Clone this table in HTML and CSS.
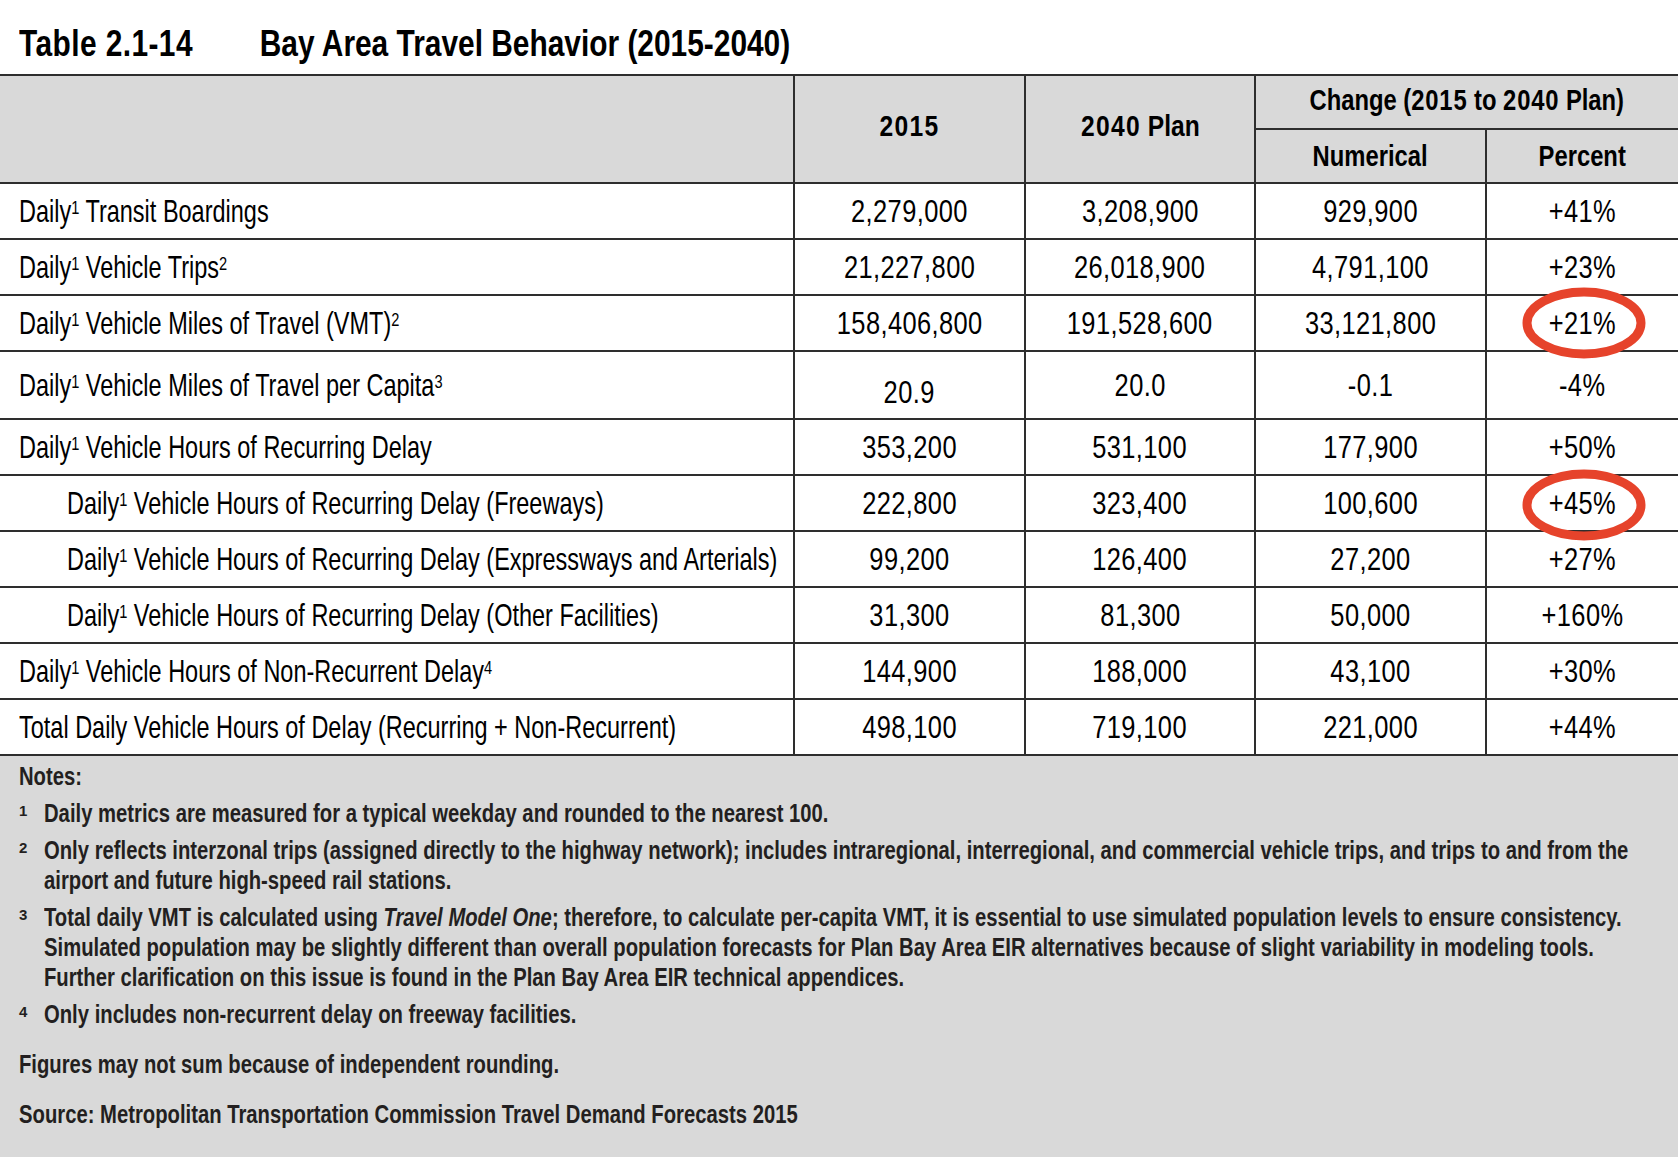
FILE: index.html
```html
<!DOCTYPE html>
<html lang="en">
<head>
<meta charset="utf-8">
<title>Table 2.1-14 Bay Area Travel Behavior (2015-2040)</title>
<link rel="stylesheet" href="styles.css">
</head>
<body>
<div class="page">
  <h1 class="title"><span class="title-num">Table 2.1-14</span><span class="title-name">Bay Area Travel Behavior (2015-2040)</span></h1>
  <table class="data">
    <colgroup>
      <col class="c-label">
      <col class="c-num">
      <col class="c-num2">
      <col class="c-num">
      <col class="c-pct">
    </colgroup>
    <thead>
      <tr class="h1row">
        <th rowspan="2" class="first"></th>
        <th rowspan="2" class="year"><span class="sx"><span class="yr">2015</span></span></th>
        <th rowspan="2" class="year"><span class="sx"><span class="yr">2040</span> Plan</span></th>
        <th colspan="2" class="last change"><span class="sx">Change (<span class="yr2">2015</span> to <span class="yr2">2040</span> Plan)</span></th>
      </tr>
      <tr class="h2row">
        <th><span class="sx">Numerical</span></th>
        <th class="last"><span class="sx">Percent</span></th>
      </tr>
    </thead>
    <tbody>
      <tr>
        <td class="label"><span class="sx">Daily<sup>1</sup> Transit Boardings</span></td>
        <td><span class="sx">2,279,000</span></td><td><span class="sx">3,208,900</span></td><td><span class="sx">929,900</span></td><td class="last"><span class="sx">+41%</span></td>
      </tr>
      <tr>
        <td class="label"><span class="sx">Daily<sup>1</sup> Vehicle Trips<sup>2</sup></span></td>
        <td><span class="sx">21,227,800</span></td><td><span class="sx">26,018,900</span></td><td><span class="sx">4,791,100</span></td><td class="last"><span class="sx">+23%</span></td>
      </tr>
      <tr>
        <td class="label"><span class="sx">Daily<sup>1</sup> Vehicle Miles of Travel (VMT)<sup>2</sup></span></td>
        <td><span class="sx">158,406,800</span></td><td><span class="sx">191,528,600</span></td><td><span class="sx">33,121,800</span></td>
        <td class="last marked"><span class="sx">+21%</span><svg class="ring ring-a" viewBox="0 0 124 72" aria-hidden="true"><ellipse cx="62" cy="36" rx="57" ry="31"/></svg></td>
      </tr>
      <tr class="tall">
        <td class="label"><span class="sx">Daily<sup>1</sup> Vehicle Miles of Travel per Capita<sup>3</sup></span></td>
        <td class="low"><span class="sx">20.9</span></td><td><span class="sx">20.0</span></td><td><span class="sx">-0.1</span></td><td class="last"><span class="sx">-4%</span></td>
      </tr>
      <tr>
        <td class="label"><span class="sx">Daily<sup>1</sup> Vehicle Hours of Recurring Delay</span></td>
        <td><span class="sx">353,200</span></td><td><span class="sx">531,100</span></td><td><span class="sx">177,900</span></td><td class="last"><span class="sx">+50%</span></td>
      </tr>
      <tr>
        <td class="label indent"><span class="sx">Daily<sup>1</sup> Vehicle Hours of Recurring Delay (Freeways)</span></td>
        <td><span class="sx">222,800</span></td><td><span class="sx">323,400</span></td><td><span class="sx">100,600</span></td>
        <td class="last marked"><span class="sx">+45%</span><svg class="ring ring-b" viewBox="0 0 124 72" aria-hidden="true"><ellipse cx="62" cy="36" rx="57" ry="31"/></svg></td>
      </tr>
      <tr>
        <td class="label indent"><span class="sx">Daily<sup>1</sup> Vehicle Hours of Recurring Delay (Expressways and Arterials)</span></td>
        <td><span class="sx">99,200</span></td><td><span class="sx">126,400</span></td><td><span class="sx">27,200</span></td><td class="last"><span class="sx">+27%</span></td>
      </tr>
      <tr>
        <td class="label indent"><span class="sx">Daily<sup>1</sup> Vehicle Hours of Recurring Delay (Other Facilities)</span></td>
        <td><span class="sx">31,300</span></td><td><span class="sx">81,300</span></td><td><span class="sx">50,000</span></td><td class="last"><span class="sx">+160%</span></td>
      </tr>
      <tr>
        <td class="label"><span class="sx">Daily<sup>1</sup> Vehicle Hours of Non-Recurrent Delay<sup>4</sup></span></td>
        <td><span class="sx">144,900</span></td><td><span class="sx">188,000</span></td><td><span class="sx">43,100</span></td><td class="last"><span class="sx">+30%</span></td>
      </tr>
      <tr>
        <td class="label"><span class="sx">Total Daily Vehicle Hours of Delay (Recurring + Non-Recurrent)</span></td>
        <td><span class="sx">498,100</span></td><td><span class="sx">719,100</span></td><td><span class="sx">221,000</span></td><td class="last"><span class="sx">+44%</span></td>
      </tr>
    </tbody>
  </table>
  <section class="notes">
    <p class="notes-head">Notes:</p>
    <div class="note"><span class="fn">1</span><p>Daily metrics are measured for a typical weekday and rounded to the nearest 100.</p></div>
    <div class="note"><span class="fn">2</span><p>Only reflects interzonal trips (assigned directly to the highway network); includes intraregional, interregional, and commercial vehicle trips, and trips to and from the<br>airport and future high-speed rail stations.</p></div>
    <div class="note"><span class="fn">3</span><p>Total daily VMT is calculated using <em>Travel Model One</em>; therefore, to calculate per-capita VMT, it is essential to use simulated population levels to ensure consistency.<br>Simulated population may be slightly different than overall population forecasts for Plan Bay Area EIR alternatives because of slight variability in modeling tools.<br>Further clarification on this issue is found in the Plan Bay Area EIR technical appendices.</p></div>
    <div class="note"><span class="fn">4</span><p>Only includes non-recurrent delay on freeway facilities.</p></div>
    <p class="remark">Figures may not sum because of independent rounding.</p>
    <p class="remark">Source: Metropolitan Transportation Commission Travel Demand Forecasts 2015</p>
  </section>
</div>
</body>
</html>
```
FILE: styles.css
```css
html, body {
  margin: 0;
  padding: 0;
  background: #ffffff;
}

body {
  font-family: "Liberation Sans", Arial, sans-serif;
  color: #000;
}

.page {
  width: 1678px;
  height: 1157px;
  overflow: hidden;
  display: flex;
  flex-direction: column;
}

/* condensed look: Arial metrics narrowed horizontally */
.sx {
  display: inline-block;
  transform: scaleX(0.82);
  transform-origin: 50% 50%;
  white-space: nowrap;
}

.title {
  margin: 0;
  padding: 24px 0 10px 23px;
  font-size: 36px;
  line-height: 40px;
  font-weight: 700;
  white-space: nowrap;
  transform: scaleX(0.83);
  transform-origin: 0 50%;
}

.title-num {
  display: inline-block;
  width: 290px;
  letter-spacing: 0.5px;
}

.data {
  width: 1678px;
  table-layout: fixed;
  border-collapse: collapse;
  flex: none;
}

.c-label { width: 794px; }
.c-num { width: 231px; }
.c-num2 { width: 230px; }
.c-pct { width: 192px; }

.data th,
.data td {
  border: 2px solid #2e2e2e;
  padding: 0;
  text-align: center;
  vertical-align: middle;
  white-space: nowrap;
}

.data th.first,
.data td.label {
  border-left: none;
}

.data .last {
  border-right: none;
}

.data thead th {
  background: #d9d9d9;
  font-size: 29px;
  font-weight: 700;
}

.data thead th.year {
  padding-bottom: 6px;
  font-size: 30px;
}

.data thead th.change {
  padding-bottom: 3px;
}

.yr {
  letter-spacing: 1.6px;
}

.yr2 {
  letter-spacing: 1px;
}

.h1row { height: 54px; }
.h2row { height: 54px; }

.data tbody tr { height: 56px; }
.data tbody tr.tall { height: 68px; }

.data td {
  font-size: 32px;
  letter-spacing: 0.5px;
}

.data td .sx {
  transform: scaleX(0.795);
}

.data td.label {
  text-align: left;
  padding-left: 19px;
  font-size: 30.5px;
  letter-spacing: 0;
}

.data td.label .sx {
  transform: scaleX(0.77);
  transform-origin: 0 50%;
}

.data td.label.indent {
  padding-left: 67px;
}

.data td.low {
  padding-top: 14px;
}

sup {
  font-size: 19px;
  line-height: 0;
  vertical-align: 8px;
  letter-spacing: 0;
}

.marked {
  position: relative;
}

.ring {
  position: absolute;
  left: 50%;
  top: 50%;
  width: 124px;
  height: 72px;
  margin-left: 1px;
  transform: translate(-50%, -50%);
  overflow: visible;
}

.ring ellipse {
  fill: none;
  stroke: #e6432b;
  stroke-width: 9;
}

.ring-b {
  margin-top: 2px;
}

.notes {
  flex: 1;
  background: #d9d9d9;
  color: #231f20;
  font-size: 25px;
  font-weight: 700;
  line-height: 30px;
  padding: 5px 0 0 19px;
}

.notes p {
  margin: 0;
  white-space: nowrap;
  transform: scaleX(0.81);
  transform-origin: 0 50%;
}

.notes-head {
  margin-bottom: 7px !important;
}

.note {
  display: flex;
  margin-bottom: 7px;
}

.fn {
  flex: none;
  width: 25px;
  font-size: 15px;
  line-height: 15px;
  padding-top: 5px;
}

.note em {
  font-style: italic;
}

.note:last-of-type {
  margin-bottom: 20px;
}

.remark {
  margin-bottom: 20px !important;
}
```
